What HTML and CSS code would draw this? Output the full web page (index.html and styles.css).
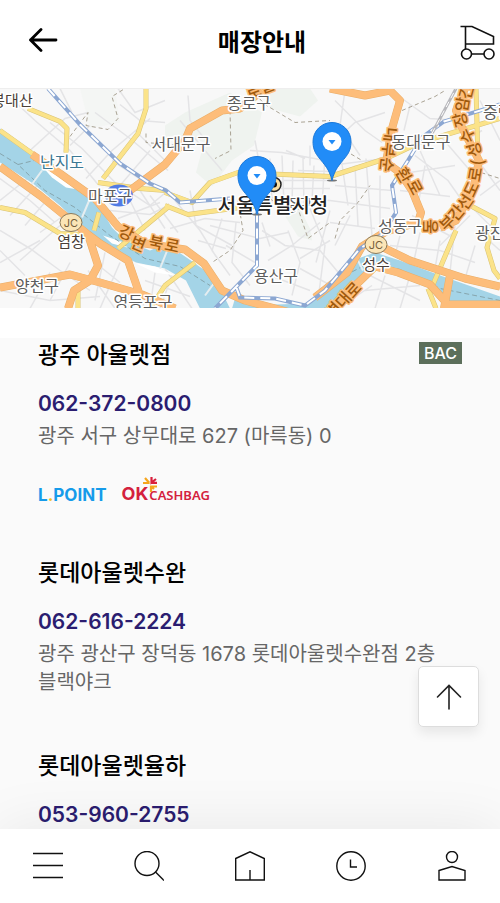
FILE: index.html
```html
<!DOCTYPE html>
<html lang="ko">
<head>
    <meta charset="UTF-8"/>
    <meta name="viewport" content="width=device-width, initial-scale=1"/>
    <title>매장안내</title>
    <link rel="stylesheet" href="styles.css">
</head>
<body>
<!-- Header -->
<header class="header">
    <button type="button" class="icon-button" aria-label="뒤로">
        <svg width="30" height="30" viewBox="0 0 30 30" fill="none" stroke="#000" stroke-width="2.800" stroke-linecap="round" stroke-linejoin="round"><path d="M28 12H2.500M13 1.500L2.500 12L13 22.500"/></svg>
    </button>
    <h1 class="header-title">매장안내</h1>
    <a href="#" class="icon-button" aria-label="장바구니">
        <svg width="36" height="36" viewBox="0 0 36 36" fill="none" stroke="#111" stroke-width="1.600"><path d="M.5 1.500H12L33.500 11.500V19H5.500M5.500 1.500V24M11 29H24"/><circle cx="6.500" cy="29" r="5"/><circle cx="29" cy="29" r="5"/></svg>
    </a>
</header>

<main class="main">
    <!-- Map -->
    <div class="map">
        <svg class="map-canvas" viewBox="0 88 500 220" preserveAspectRatio="xMidYMid slice" role="img" aria-label="지도">
            <rect x="0" y="88" width="500" height="220" fill="#f8f8f8"/>
            <!-- hills -->
            <g fill="#eff3ef">
                <path d="M165 125L185 112L230 92L262 112L254 145L232 160L212 186L196 172L204 142L190 136L165 140Z"/>
                <path d="M262 88H310L318 100L300 116L270 108Z"/>
                <path d="M284 214L300 208L310 228L312 240L298 236Z"/>
                <path d="M80 88H115L120 122L90 128Z" fill="#f4f6f4"/>
            </g>
            <!-- small streets -->
            <g fill="none" stroke="#e4e4e6" stroke-width="1.500">
                <path d="M8 95L35 120L70 150L98 184M50 122L82 148L118 185M30 150L65 118L88 112M70 145L90 125M86 178L112 150L150 118M95 112L130 138L168 170M120 104L140 120L165 122M135 130L165 160M112 160L150 185M118 88L135 112L165 100M60 88L72 112M150 150L120 185L150 205L168 190"/>
                <path d="M0 178L30 200L55 222M0 200L35 172M10 215L40 182M25 225L55 190M40 232L68 212M0 230L30 248L60 270L90 290M20 260L60 225M0 262L40 240M50 272L30 308M70 262L50 300M0 290L50 300L100 296M95 262L120 282M88 270L115 308M105 252L95 300M120 262L100 308M130 275L145 308M0 250L25 275"/>
                <path d="M110 210L150 214L168 205M128 196L145 230M140 190L165 228M118 218L160 202M150 195L178 232M165 268L192 308M145 280L190 296M155 272L150 308M172 275L160 308"/>
                <path d="M180 120L205 150L222 170M188 95L190 120L206 140M175 200L200 230L216 256M190 190L196 225L232 245M170 228L205 218L240 222M222 218L212 250L230 275M210 225L260 238L288 232M226 245L255 262M236 222L232 262L250 285M198 240L226 248"/>
                <path d="M250 150L282 152L325 160M255 140L258 156M270 158L272 202M282 155L284 205M293 160L292 205M303 158L304 205M314 165L312 200M325 155L322 206M270 188H330M270 197L330 200M284 180H328M298 170L330 171M286 150L305 158M310 145V165"/>
                <path d="M262 230L285 245L320 250L345 280M268 260L292 245L320 222M288 230L300 262L292 295M300 258L330 240M310 208L325 245L318 300M330 210L316 262M270 275L310 290M300 268L340 290M262 222L270 246"/>
                <path d="M335 100L365 130L382 142M345 90L340 125L360 155M330 145L355 122L385 112M330 165L385 158M335 185L392 190M330 200L390 208M340 150L348 205M355 165L358 225M366 158L372 235M380 175V240M330 222L375 228M335 245L350 215M402 98L430 118L460 120M410 105L404 130M415 155L448 180L462 200M410 172L455 165M420 150L440 195M400 190L450 196M425 165L418 205M412 215L455 238M440 135L470 170M480 100L500 140M482 130L465 140M478 160L500 190M480 195L500 180M470 215L440 245"/>
                <path d="M400 235L395 255M420 232L414 260M440 240L435 268M390 245L440 250L475 262M455 225L450 272M470 205L500 235M370 275L420 300M385 275L375 308M365 290L420 285M350 300L372 285M410 275L400 308M480 232L500 250M475 245L465 278"/>
            </g>
            <g fill="none" stroke="#aaa394" stroke-width="1" stroke-dasharray="4 3">
                <path d="M70 136L88 112L86 125L108 129L118 118L112 96L125 88M146 133V142L178 145"/>
                <path d="M230 110L231 150L215 158M250 88L265 104L295 122L330 120M238 200L243 230L230 250L212 262M258 190L280 205L298 208L308 238L330 222M402 110L435 96L445 90M335 238L340 220L358 202L370 185M345 150L362 160M468 168L500 178"/>
            </g>
            <!-- river -->
            <g fill="#a4d4e7">
                <path d="M0 128L32 153L55 177L80 191L100 207L112 227L125 240L150 250L166 243L188 258L215 277L230 308H200L186 280L165 268L136 262L112 250L85 229L60 205L33 183L0 162Z"/>
                <path d="M235 298L275 304L310 303L335 286L358 258L375 252L400 260L443 276L500 296V308H455L430 286L395 272L372 268L358 279L334 308H232Z"/>
            </g>
            <g fill="#fff">
                <path d="M44 168L60 175L78 189L66 187L52 177Z"/>
                <path d="M103 235L124 242L127 247L112 243Z"/>
                <path d="M136 263L155 266L175 275L155 272Z"/>
            </g>
            <g fill="none" stroke="#86a5ad" stroke-width="1" stroke-dasharray="5 3">
                <path d="M0 153L18 164L45 190L75 207L110 235L145 258L180 266L210 285"/>
                <path d="M18 164L38 159M345 275L370 262L400 269L440 288L500 300"/>
            </g>
            <g fill="none" stroke="#e5edf0" stroke-width="2">
                <path d="M42 170L31 185M90 198L82 217M216 280L205 295M168 248L160 268M356 256L363 270"/>
            </g>
            <!-- yellow roads -->
            <g fill="none" stroke="#d9c376" stroke-width="5" stroke-linejoin="round">
                <path d="M0 130L35 155M28 108L60 121L67 128L66 152M146 88V108L138 133L103 178M98 182L140 188L166 190M0 207L25 212L60 233L82 234M170 205L118 248M99 212L94 230M165 205L188 214L240 207L265 205M165 192L192 202L210 182L238 172L330 176L386 158L420 142L500 118M195 262L165 285L150 308M476 88L478 160M456 230L433 284M472 206L495 218L487 247L494 270L500 278M428 288L436 308M78 290V308"/>
            </g>
            <g fill="none" stroke="#fbe389" stroke-width="4" stroke-linejoin="round">
                <path d="M0 130L35 155M28 108L60 121L67 128L66 152M146 88V108L138 133L103 178M98 182L140 188L166 190M0 207L25 212L60 233L82 234M170 205L118 248M99 212L94 230M165 205L188 214L240 207L265 205M165 192L192 202L210 182L238 172L330 176L386 158L420 142L500 118M195 262L165 285L150 308M476 88L478 160M456 230L433 284M472 206L495 218L487 247L494 270L500 278M428 288L436 308M78 290V308"/>
            </g>
            <!-- expressways -->
            <g fill="none" stroke="#e9ae69" stroke-width="8" stroke-linejoin="round">
                <path d="M32 154L60 173L95 198L118 226L145 243L185 249L204 263L222 290L245 300L290 312"/>
                <path d="M0 166L40 195L88 234L100 243L128 260L140 295M88 234L98 265L90 280L74 290L68 308M0 287L70 274L100 282L142 294L175 308"/>
                <path d="M130 190L165 164L185 140L190 128L222 110L240 108L262 90M330 88L365 95L390 90L400 100L392 128L386 162L400 172L412 190L421 212L418 222L386 231L362 246L347 272L315 297"/>
                <path d="M440 227L456 220L473 190L479 160L462 127L456 110L465 88M377 244L410 260L465 278L500 286M375 266L398 272L430 284L448 304H500M450 275L444 308M375 266L350 290L332 308"/>
            </g>
            <g fill="none" stroke="#fdbd7a" stroke-width="7" stroke-linejoin="round">
                <path d="M32 154L60 173L95 198L118 226L145 243L185 249L204 263L222 290L245 300L290 312"/>
                <path d="M0 166L40 195L88 234L100 243L128 260L140 295M88 234L98 265L90 280L74 290L68 308M0 287L70 274L100 282L142 294L175 308"/>
                <path d="M130 190L165 164L185 140L190 128L222 110L240 108L262 90M330 88L365 95L390 90L400 100L392 128L386 162L400 172L412 190L421 212L418 222L386 231L362 246L347 272L315 297"/>
                <path d="M440 227L456 220L473 190L479 160L462 127L456 110L465 88M377 244L410 260L465 278L500 286M375 266L398 272L430 284L448 304H500M450 275L444 308M375 266L350 290L332 308"/>
            </g>
            <!-- railways -->
            <g fill="none" stroke="#8ca7d2" stroke-width="4">
                <path d="M48 88L80 124L120 163L150 183L166 190L180 202L230 198M257 212V265L215 308M236 286L240 297L275 298L305 305L325 290L360 248L382 234L396 212L392 185L408 160L422 137L444 121L500 104"/>
            </g>
            <g fill="none" stroke="#fff" stroke-width="2" stroke-dasharray="10 6">
                <path d="M48 88L80 124L120 163L150 183L166 190L180 202L230 198M257 212V265L215 308M236 286L240 297L275 298L305 305L325 290L360 248L382 234L396 212L392 185L408 160L422 137L444 121L500 104"/>
            </g>
            <path d="M432 133L456 88" fill="none" stroke="#b8b8bc" stroke-width="3"/>
            <path d="M432 133L456 88" fill="none" stroke="#fff" stroke-width="1" stroke-dasharray="6 4"/>
            <!-- road names -->
            <g class="road-name">
                <text transform="translate(126 233) rotate(25)" dy="5">강</text>
                <text transform="translate(138 244) rotate(22)" dy="5">변</text>
                <text transform="translate(156 243) rotate(12)" dy="5">북</text>
                <text transform="translate(172 246) rotate(12)" dy="5">로</text>
                <text transform="translate(390 134) rotate(96)" dy="5">내</text>
                <text transform="translate(388 149) rotate(96)" dy="5">부</text>
                <text transform="translate(386 164) rotate(96)" dy="5">순</text>
                <text transform="translate(403 175) rotate(60)" dy="5">환</text>
                <text transform="translate(414 187) rotate(62)" dy="5">로</text>
                <text transform="translate(431 226) rotate(-90)" dy="5">동</text>
                <text transform="translate(448 223) rotate(-45)" dy="5">부</text>
                <text transform="translate(457 213) rotate(-50)" dy="5">간</text>
                <text transform="translate(466 202) rotate(-55)" dy="5">선</text>
                <text transform="translate(472 189) rotate(-65)" dy="5">도</text>
                <text transform="translate(476 174) rotate(-80)" dy="5">로</text>
                <text transform="translate(479 162) rotate(-88)" dy="5">(</text>
                <text transform="translate(475 149) rotate(-105)" dy="5">성</text>
                <text transform="translate(468 135) rotate(-115)" dy="5">수</text>
                <text transform="translate(461 119) rotate(-105)" dy="5">장</text>
                <text transform="translate(463 104) rotate(-80)" dy="5">암</text>
                <text transform="translate(467 91) rotate(-75)" dy="5">간</text>
                <text transform="translate(354 290) rotate(-48)" dy="5">로</text>
                <text transform="translate(344 300) rotate(-48)" dy="5">대</text>
                <text transform="translate(334 310) rotate(-48)" dy="5">변</text>
                <text transform="translate(254 92) rotate(-20)" dy="5">로</text>
                <text transform="translate(267 86) rotate(-20)" dy="5">길</text>
            </g>
            <!-- place names -->
            <ellipse cx="119" cy="195" rx="14" ry="11" fill="#527be4"/>
            <path d="M109 195H129M115 190L120 195L126 190" stroke="#fff" stroke-width="2" fill="none"/>
            <g class="place-name">
                <text x="249" y="108">종로구</text>
                <text x="181" y="149">서대문구</text>
                <text x="110" y="201">마포구</text>
                <text x="421" y="147">동대문구</text>
                <text x="400" y="231">성동구</text>
                <text x="497" y="238">광진구</text>
                <text x="505" y="117">중랑구</text>
                <text x="276" y="281">용산구</text>
                <text x="37" y="291">양천구</text>
                <text x="143" y="307">영등포구</text>
                <text x="298" y="210">중구</text>
            </g>
            <g class="spot-name">
                <text x="12" y="105">봉대산</text>
                <text x="71" y="246">염창</text>
                <text x="376" y="269">성수</text>
                <text x="62" y="167" class="water-name">난지도</text>
            </g>
            <g class="junction">
                <ellipse cx="71" cy="222" rx="11" ry="9"/>
                <text x="71" y="226">JC</text>
                <ellipse cx="376" cy="244" rx="11" ry="9"/>
                <text x="376" y="248">JC</text>
            </g>
            <circle cx="274" cy="184" r="7" fill="#fbdfa2" stroke="#222" stroke-width="1.500"/>
            <circle cx="274" cy="184" r="3" fill="#111"/>
            <text x="273" y="212" class="city-name">서울특별시청</text>
            <!-- store pins -->
            <g id="pin">
                <ellipse cx="257" cy="214" rx="5" ry="1" fill="#777"/>
                <path d="M257 214C254 202 250 199 243 190C239 185 238 180 238 175A19 19 0 0 1 276 175C276 180 275 185 271 190C264 199 260 202 257 214Z" fill="#218cf7" stroke="#1978da" stroke-width="1"/>
                <circle cx="257" cy="175" r="9.500" fill="#fff"/>
                <path d="M253.500 173.500H260.500L257 178Z" fill="#218cf7"/>
            </g>
            <use href="#pin" x="75" y="-34"/>
        </svg>
    </div>

    <!-- Store list -->
    <div class="store-list">
        <section class="store">
            <div class="store-head">
                <h2 class="store-name">광주 아울렛점</h2>
                <span class="badge">BAC</span>
            </div>
            <a href="tel:062-372-0800" class="phone">062-372-0800</a>
            <p class="address">광주 서구 상무대로 627 (마륵동) 0</p>
            <div class="points">
                <span class="lpoint">L<span class="lpoint-dot">.</span>POINT</span>
                <span class="cashbag">
                    <span class="cashbag-ok">OK</span>
                    <svg class="cashbag-mark" width="16" height="16" viewBox="0 0 16 16" fill="none" stroke-width="2.200"><path d="M1 6H6.500V4M3 1L6.500 5" stroke="#f5a51d"/><path d="M9.500 0V5.500L14 2M9.500 5.800H15" stroke="#d91f3c"/><path d="M9 15V9.500H15M9 9.500L12 12" stroke="#f5a51d"/></svg>
                    <span class="cashbag-name">CASHBAG</span>
                </span>
            </div>
        </section>
        <section class="store">
            <div class="store-head">
                <h2 class="store-name">롯데아울렛수완</h2>
            </div>
            <a href="tel:062-616-2224" class="phone">062-616-2224</a>
            <p class="address">광주 광산구 장덕동 1678 롯데아울렛수완점 2층 블랙야크</p>
        </section>
        <section class="store">
            <div class="store-head">
                <h2 class="store-name">롯데아울렛율하</h2>
            </div>
            <a href="tel:053-960-2755" class="phone">053-960-2755</a>
        </section>
    </div>
</main>

<button type="button" class="top-button" aria-label="맨 위로">
    <svg width="26" height="26" viewBox="0 0 26 26" fill="none" stroke="#222" stroke-width="1.600" stroke-linecap="round"><path d="M13 25V1.500M1.500 13L13 1.500L24.500 13"/></svg>
</button>

<!-- Bottom menu -->
<nav class="bottom-nav">
    <a href="#" aria-label="메뉴"><svg width="30" height="30" viewBox="0 0 30 30"><path d="M0 2.500H30M0 14.500H30M0 26.500H30"/></svg></a>
    <a href="#" aria-label="검색"><svg width="30" height="30" viewBox="0 0 30 30"><circle cx="13" cy="12.500" r="12"/><path d="M21.500 21L30 29.500"/></svg></a>
    <a href="#" aria-label="홈"><svg width="30" height="30" viewBox="0 0 30 30"><path d="M.7 7.500L15 .8L29.300 7.500V29H.7ZM15 29V19"/></svg></a>
    <a href="#" aria-label="최근 본 상품"><svg width="30" height="30" viewBox="0 0 30 30"><circle cx="15" cy="15" r="14.200"/><path d="M14.500 8.500V16H21"/></svg></a>
    <a href="#" aria-label="마이페이지"><svg width="30" height="30" viewBox="0 0 30 30"><circle cx="15" cy="6" r="5.500"/><path d="M2 19.500L15 15.500L28 19.500V29H2Z"/></svg></a>
</nav>
</body>
</html>
```
FILE: styles.css
```css
* {
box-sizing: border-box;
}
body {
display: flex;
flex-direction: column;
height: 100vh;
margin: 0;
font-family: Inter, "Noto Sans CJK KR", sans-serif;
color: #000;
background-color: #fff;
}
h1, h2, p {
margin: 0;
}
/* Header */
.header {
display: flex;
justify-content: space-between;
align-items: center;
flex-shrink: 0;
height: 89px;
padding: 0 4px 2px 28px;
border-bottom: 1px solid #eee;
}
.icon-button {
display: flex;
align-items: center;
width: 36px;
height: 36px;
padding: 0;
border: 0;
background: none;
}
.header-title {
font-size: 24px;
line-height: 32px;
font-weight: 700;
}
.main {
flex: 1;
min-height: 0;
overflow: hidden;
}
/* Map */
.map {
height: 219px;
}
.map-canvas {
display: block;
width: 100%;
height: 100%;
}
.map-canvas text {
font-family: "Noto Sans CJK KR", sans-serif;
text-anchor: middle;
paint-order: stroke;
stroke: #fff;
stroke-width: 3px;
stroke-linejoin: round;
}
.map-canvas .place-name text {
font-size: 16px;
fill: #5c5c5c;
}
.map-canvas .spot-name text {
font-size: 15px;
fill: #4a4038;
}
.map-canvas .spot-name .water-name {
font-size: 16px;
fill: #3c7894;
}
.map-canvas .road-name text {
font-size: 16px;
font-weight: 500;
fill: #a05a0c;
stroke: #fdbd7a;
}
.map-canvas .city-name {
font-size: 20px;
font-weight: 500;
fill: #222;
}
.junction ellipse {
fill: #fbe5b6;
stroke: #8c7a5a;
stroke-width: 1px;
}
.map-canvas .junction text {
font-family: Inter, sans-serif;
font-size: 11px;
fill: #75603c;
stroke: none;
}
/* Store list */
.store-list {
margin-top: 30px;
padding: 2px 38px 0;
background-color: #fafafa;
}
.store {
margin-bottom: 55px;
}
.store-head {
display: flex;
justify-content: space-between;
align-items: flex-start;
height: 30px;
margin-bottom: 19px;
}
.store-name {
font-size: 23px;
line-height: 30px;
font-weight: 500;
}
.badge {
height: 22px;
margin-top: 2px;
padding: 0 5px;
font-size: 16px;
line-height: 22px;
font-weight: 500;
color: #fff;
background-color: #5c6f5b;
}
.phone {
display: block;
font-size: 21px;
line-height: 30px;
font-weight: 600;
color: #2b1d70;
text-decoration: none;
}
.address {
margin-top: 3px;
font-size: 20px;
line-height: 28px;
color: #666;
word-break: keep-all;
}
.points {
display: flex;
align-items: flex-end;
gap: 15px;
height: 26px;
margin-top: 27px;
line-height: 16px;
}
.lpoint {
font-size: 17px;
font-weight: 700;
color: #159bea;
}
.lpoint-dot {
color: #f5c21d;
}
.cashbag {
display: flex;
align-items: baseline;
color: #d4213d;
}
.cashbag-ok {
font-size: 18px;
font-weight: 700;
}
.cashbag-mark {
align-self: flex-start;
margin: -9px -9px 0 -6px;
}
.cashbag-name {
font-family: "Noto Sans", sans-serif;
font-size: 13px;
font-weight: 600;
}
/* Scroll to top */
.top-button {
position: fixed;
right: 21px;
bottom: 176px;
display: flex;
justify-content: center;
align-items: center;
width: 61px;
height: 61px;
padding: 0;
border: 1px solid #ddd;
border-radius: 5px;
background-color: #fff;
box-shadow: 0 6px 12px rgba(0, 0, 0, 0.08);
}
/* Bottom menu */
.bottom-nav {
position: relative;
display: flex;
justify-content: space-between;
align-items: center;
flex-shrink: 0;
height: 74px;
padding: 0 33px;
background-color: #fff;
box-shadow: 0 0 60px rgba(0, 0, 0, 0.08);
}
.bottom-nav a {
display: flex;
}
.bottom-nav svg {
fill: none;
stroke: #111;
stroke-width: 1.4px;
}
```
